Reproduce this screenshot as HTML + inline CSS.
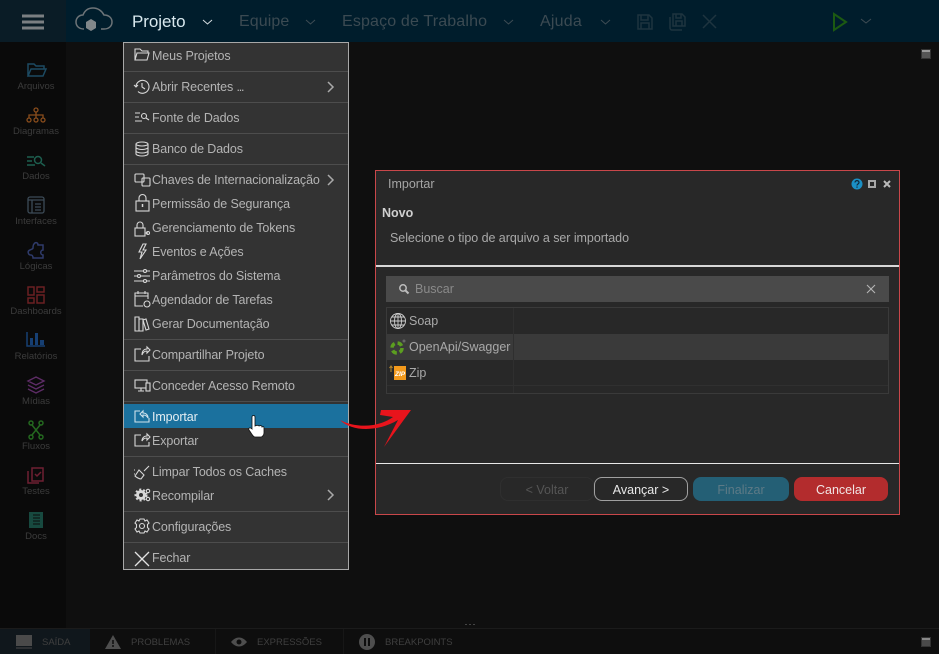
<!DOCTYPE html>
<html lang="pt"><head><meta charset="utf-8"><title>Importar</title>
<style>
html,body{margin:0;padding:0;background:#0f0f0f}
#p{position:relative;width:939px;height:654px;overflow:hidden;background:#0f0f0f;font-family:"Liberation Sans",sans-serif}
#p div,#p span.t{position:absolute}
.t{white-space:nowrap;line-height:16px;height:16px}
.m{font-size:12.5px;color:#b4b4b4;left:152px;letter-spacing:-.11px}
.s{font-size:9.5px;color:#3c3c3c;width:66px;left:3px;text-align:center}
.n{font-size:16px;color:#3b4a52;line-height:20px;height:20px}
.sep{left:124px;width:224px;height:1px;background:#4d4d4d}
.b{font-size:9.5px;color:#3f3f3f;top:635px}
.btn{top:477px;width:92px;height:22px;line-height:24px;border-radius:8px;text-align:center;font-size:12.5px;border:1px solid transparent}
svg{position:absolute;left:0;top:0}
</style></head><body><div id="p">
<div style="left:0;top:0;width:939px;height:42px;background:#001d2c"></div>
<div style="left:0;top:0;width:66px;height:42px;background:#0a1c26"></div>
<div style="left:0;top:42px;width:66px;height:586px;background:#0a0a0a"></div>
<div style="left:0;top:628px;width:939px;height:26px;background:#0e0e0e;border-top:1px solid #1b1b1b;box-sizing:border-box"></div>
<div style="left:0;top:629px;width:90px;height:25px;background:#10171c"></div>
<div style="left:215px;top:629px;width:1px;height:25px;background:#171717"></div>
<div style="left:343px;top:629px;width:1px;height:25px;background:#171717"></div>

<span class="t" style="left:132px;top:12px;font-size:17px;line-height:20px;height:20px;color:#d8e8ee;letter-spacing:-.05px">Projeto</span>
<span class="t n" style="left:239px;top:12px;letter-spacing:.1px">Equipe</span>
<span class="t n" style="left:342px;top:12px;letter-spacing:.16px">Espaço de Trabalho</span>
<span class="t n" style="left:540px;top:12px;letter-spacing:.2px">Ajuda</span>

<span class="t s" style="top:79px">Arquivos</span>
<span class="t s" style="top:124px">Diagramas</span>
<span class="t s" style="top:169px">Dados</span>
<span class="t s" style="top:214px">Interfaces</span>
<span class="t s" style="top:259px">Lógicas</span>
<span class="t s" style="top:304px">Dashboards</span>
<span class="t s" style="top:349px">Relatórios</span>
<span class="t s" style="top:394px">Mídias</span>
<span class="t s" style="top:439px">Fluxos</span>
<span class="t s" style="top:484px">Testes</span>
<span class="t s" style="top:529px">Docs</span>

<span class="t b" style="left:42px">SAÍDA</span>
<span class="t b" style="left:131px">PROBLEMAS</span>
<span class="t b" style="left:257px">EXPRESSÕES</span>
<span class="t b" style="left:385px">BREAKPOINTS</span>

<!-- menu -->
<div style="left:123px;top:42px;width:224px;height:526px;background:#333;border:1px solid #a8a8a8"></div>
<div style="left:124px;top:404px;width:224px;height:24px;background:#1b719e"></div>
<div class="sep" style="top:71px"></div><div class="sep" style="top:102px"></div><div class="sep" style="top:133px"></div><div class="sep" style="top:164px"></div><div class="sep" style="top:339px"></div><div class="sep" style="top:370px"></div><div class="sep" style="top:401px"></div><div class="sep" style="top:456px"></div><div class="sep" style="top:511px"></div><div class="sep" style="top:542px"></div>
<span class="t m" style="top:48px">Meus Projetos</span>
<span class="t m" style="top:79px">Abrir Recentes <span style="letter-spacing:-1.2px">...</span></span>
<span class="t m" style="top:110px">Fonte de Dados</span>
<span class="t m" style="top:141px">Banco de Dados</span>
<span class="t m" style="top:172px">Chaves de Internacionalização</span>
<span class="t m" style="top:196px">Permissão de Segurança</span>
<span class="t m" style="top:220px">Gerenciamento de Tokens</span>
<span class="t m" style="top:244px">Eventos e Ações</span>
<span class="t m" style="top:268px">Parâmetros do Sistema</span>
<span class="t m" style="top:292px">Agendador de Tarefas</span>
<span class="t m" style="top:316px">Gerar Documentação</span>
<span class="t m" style="top:347px">Compartilhar Projeto</span>
<span class="t m" style="top:378px">Conceder Acesso Remoto</span>
<span class="t m" style="top:409px;color:#e4eef3">Importar</span>
<span class="t m" style="top:433px">Exportar</span>
<span class="t m" style="top:464px">Limpar Todos os Caches</span>
<span class="t m" style="top:488px">Recompilar</span>
<span class="t m" style="top:519px">Configurações</span>
<span class="t m" style="top:550px">Fechar</span>

<!-- dialog -->
<div style="left:375px;top:170px;width:523px;height:343px;background:#282828;border:1px solid #c9474a"></div>
<span class="t" style="left:388px;top:176px;font-size:12.5px;color:#a5a5a5">Importar</span>
<span class="t" style="left:382px;top:205px;font-size:12.5px;font-weight:bold;color:#cfcfcf">Novo</span>
<span class="t" style="left:390px;top:230px;font-size:12.5px;color:#a9a9a9;letter-spacing:-.05px">Selecione o tipo de arquivo a ser importado</span>
<div style="left:376px;top:265px;width:523px;height:2px;background:#d8d8d8"></div>
<div style="left:376px;top:463px;width:523px;height:1px;background:#e8e8e8"></div>
<div style="left:386px;top:276px;width:503px;height:26px;background:#4a4a4a"></div>
<span class="t" style="left:415px;top:281px;font-size:12.5px;color:#8a8a8a">Buscar</span>
<div style="left:386px;top:307px;width:501px;height:85px;border:1px solid #3a3a3a"></div>
<div style="left:387px;top:334px;width:501px;height:26px;background:#3a3a3a"></div>
<div style="left:387px;top:385px;width:501px;height:1px;background:#303030"></div>
<div style="left:513px;top:308px;width:1px;height:85px;background:#2f2f2f"></div>
<span class="t" style="left:409px;top:313px;font-size:12.5px;color:#a9a9a9">Soap</span>
<span class="t" style="left:409px;top:339px;font-size:12.5px;color:#a9a9a9">OpenApi/Swagger</span>
<span class="t" style="left:409px;top:365px;font-size:12.5px;color:#a9a9a9">Zip</span>
<div class="btn" style="left:500px;color:#555;border-color:#2f2f2f">&lt; Voltar</div>
<div class="btn" style="left:594px;color:#e8e8e8;border-color:#a0a0a0">Avançar &gt;</div>
<div class="btn" style="left:693px;width:94px;color:#5d7a86;background:#245f75">Finalizar</div>
<div class="btn" style="left:794px;width:92px;color:#f0e4e4;background:#b32c2d">Cancelar</div>

<svg width="939" height="654" viewBox="0 0 939 654" fill="none">
<!-- hamburger -->
<path d="M22 16h22M22 22h22M22 28h22" stroke="#7b7f82" stroke-width="3"/>
<!-- cloud -->
<path d="M84 29c-5 0-8-3-8-7s3-7 7-7c2-5 6-7 10-7 5 0 9 3 11 7 5 0 8 3 8 7s-3 7-8 7h-3" stroke="#6d7478" stroke-width="1.500"/>
<path d="M86 22l5-3 5 3v6l-5 3-5-3z" fill="#81878a"/>
<!-- nav chevrons -->
<path d="M203 20l4.500 4 4.500-4" stroke="#d5dde0" stroke-width="1"/>
<path d="M306 20l4.500 4 4.500-4M504 20l4.500 4 4.500-4M601 20l4.500 4 4.500-4M861 19l5 4 5-4" stroke="#3e4c54" stroke-width="1"/>
<!-- save etc -->
<path d="M638 15h11l3 3v11h-14zM641 15v5h7v-5M641 29v-6h8v6" stroke="#1e343f" stroke-width="1.500"/>
<path d="M673 14h9l3 3v9h-12zM676 14v4h5v-4M676 26v-5h6v5M670 17v11a2 2 0 0 0 2 2h10" stroke="#1e343f" stroke-width="1.500"/>
<path d="M703 15l13 13M716 15l-13 13" stroke="#1e343f" stroke-width="1.500"/>
<path d="M834 14v16l12-8z" stroke="#1c5a12" stroke-width="2"/>
<!-- panel icon -->
<rect x="921.500" y="49.500" width="9" height="9" fill="#555" stroke="#333"/><rect x="922" y="50" width="8" height="2" fill="#999"/>
<rect x="921.500" y="637.500" width="9" height="9" fill="#4a4a4a" stroke="#333"/><rect x="922" y="638" width="8" height="2" fill="#888"/>
<!-- sidebar icons -->
<path d="M28 76V64h6l2 2h8v3M28 76l3-7h15l-3 7z" stroke="#1c4a62" stroke-width="1.500"/>
<g stroke="#8a4d1c" stroke-width="1.300"><circle cx="36" cy="110" r="2"/><circle cx="29" cy="120" r="2"/><circle cx="36" cy="120" r="2"/><circle cx="43" cy="120" r="2"/><path d="M36 112v6M29 118v-3h14v3"/></g>
<path d="M27 157h7M27 161h5M27 165h8" stroke="#1d5f4f" stroke-width="1.400"/><circle cx="38" cy="160" r="3.500" stroke="#1d5f4f" stroke-width="1.500"/><path d="M41 163l4 3" stroke="#1d5f4f" stroke-width="1.500"/>
<g stroke="#3c4b57" stroke-width="1.300"><rect x="28" y="197" width="16" height="16" rx="2"/><path d="M28 200h16M32 200v13M35 204h6M35 207h6M35 210h6"/></g>
<path d="M34 244c1-2 4-2 4 1h5v5c-3 0-3 5 0 5v3H33c0-2-1-3-2-3-3 0-4-4-1-5 2-1 3-1 3-2 0-2 0-3 1-4z" stroke="#2f3b6b" stroke-width="1.500"/>
<g stroke="#6b1f22" stroke-width="1.500"><rect x="28" y="287" width="6" height="8"/><rect x="37" y="287" width="7" height="5"/><rect x="28" y="298" width="6" height="5"/><rect x="37" y="295" width="7" height="8"/></g>
<path d="M27 332v14h18" stroke="#163f73" stroke-width="1.500"/><path d="M30 338h3v7h-3zM35 333h3v12h-3zM40 340h4v5h-4z" fill="#163f73"/>
<g stroke="#5d2c66" stroke-width="1.400"><path d="M36 377l8 4-8 4-8-4zM28 385l8 4 8-4M28 389l8 4 8-4"/></g>
<g stroke="#24681f" stroke-width="1.500"><circle cx="31" cy="423" r="2"/><circle cx="41" cy="423" r="2"/><circle cx="31" cy="437" r="2"/><circle cx="41" cy="437" r="2"/><path d="M32 425l8 10M40 425l-8 10"/></g>
<g stroke="#6e1f32" stroke-width="1.500"><rect x="32" y="468" width="11" height="13"/><path d="M28 471v12h11M35 474l2 2 4-4"/></g>
<path d="M29 512h14v16H29z" fill="#17493f"/><path d="M33 515h7M33 518h7M33 521h7M33 524h7" stroke="#0b0b0b"/>
<!-- bottom icons -->
<rect x="16" y="635" width="16" height="11" fill="#4a4a4a"/><path d="M16 648h16" stroke="#4a4a4a"/>
<path d="M113 635l8 14h-16z" fill="#4e4e4e"/><path d="M113 640v4M113 645v2" stroke="#0e0e0e" stroke-width="1.500"/>
<path d="M231 642c5-6 11-6 16 0-5 6-11 6-16 0z" fill="#4e4e4e"/><circle cx="239" cy="642" r="2.500" fill="#0e0e0e"/>
<circle cx="367" cy="642" r="8" fill="#4e4e4e"/><path d="M365 638v8M369 638v8" stroke="#0e0e0e" stroke-width="2"/>
<path d="M465 624.500h2M469 624.500h2M473 624.500h2" stroke="#444" stroke-width="1"/>

<!-- menu icons -->
<g stroke="#d8d8d8" stroke-width="1.100">
<path d="M135 60V49h5l2 2h6v2M135 60l2-7h12l-2 7z"/>
<path d="M136 87a6.500 6.500 0 1 1 2 4.500M134 85l2 2 2-2M142 83v4l3 2"/>
<path d="M135 113h5M135 117h4M135 121h7"/><circle cx="144" cy="116" r="2.500"/><path d="M146 118l3 2"/>
<ellipse cx="142" cy="144" rx="6" ry="2"/><path d="M136 144v10c0 1 3 2 6 2s6-1 6-2v-10M136 147.500c0 1 3 2 6 2s6-1 6-2M136 151c0 1 3 2 6 2s6-1 6-2"/>
<rect x="135" y="174" width="9" height="8" rx="1"/><rect x="142" y="178" width="8" height="8" rx="1"/>
<rect x="136" y="201" width="13" height="10"/><path d="M139 201v-3a3.500 3.500 0 0 1 7 0v3"/><path d="M142.500 204v3" stroke-width="1.500"/>
<rect x="135" y="228" width="10" height="8"/><path d="M137 228v-3a3 3 0 0 1 6 0v3M145 233h3"/><circle cx="148" cy="233" r="1.500"/>
<path d="M143 244l-4 8h3l-2 7 6-9h-3l3-6z"/>
<path d="M134 271h16M134 276h16M134 281h16"/><circle cx="145" cy="271" r="1.500" fill="#333"/><circle cx="139" cy="276" r="1.500" fill="#333"/><circle cx="145" cy="281" r="1.500" fill="#333"/>
<path d="M148 299v-6h-13v13h8M135 296h13M138 291v3M145 291v3"/><circle cx="147" cy="304" r="3"/>
<path d="M135 317h4v14h-4zM139 319h4v12h-4zM143 320l3-1 3 10-3 1z"/>
<path d="M141 349h-6v12h14v-5M142 355c0-4 2-6 5-6v-2l3 3-3 3v-2c-2 0-4 1-5 4z"/>
<rect x="135" y="380" width="12" height="8"/><path d="M138 391h6M141 388v3"/><rect x="146" y="383" width="4" height="8" fill="#333"/>
<path d="M140 411h-5v11h14v-4" stroke="#cfe2ec"/><path d="M148 418c0-3-2-5-5-5v-2l-3 3 3 3v-2c2 0 4 1 5 3z" stroke="#cfe2ec"/>
<path d="M141 435h-6v11h14v-4M142 441c0-3 2-5 5-5v-2l3 3-3 3v-2c-2 0-4 1-5 3z"/>
<path d="M144 471l5-5M139 470l5 5-3 4c-2 0-5-2-6-3zM135 474l-1 0M134 470h1"/>
<circle cx="141" cy="495" r="3.500" stroke-width="3"/><circle cx="141" cy="495" r="5.500" stroke-dasharray="2 2" stroke-width="2"/><circle cx="148" cy="491" r="1.700"/><circle cx="148" cy="499" r="1.700"/>
<circle cx="142" cy="526" r="2.500"/><path d="M140 519h4l1 2 2-1 2 3-1.500 1.500v3L149 529l-2 3-2-1-1 2h-4l-1-2-2 1-2-3 1.500-1.500v-3L135 523l2-3 2 1z"/>
</g>
<path d="M135 552l14 14M149 552l-14 14" stroke="#e2e2e2" stroke-width="1.300"/>
<path d="M328 82l5 5-5 5M328 175l5 5-5 5M328 490l5 5-5 5" stroke="#a9a9a9" stroke-width="1.500"/>

<!-- cursor -->
<path d="M252 417c0-2 3-2 3 0v9c2-1 3-1 4 0 2-1 3 0 3 1 2-1 2 0 2 2v4c0 2-2 4-3 4h-6c-2 0-3-3-6-7-1-2 1-3 3-1z" fill="#fff" stroke="#111" stroke-width=".8"/>

<!-- arrow -->
<path d="M340 420C355 428 378 428 393 417L380 415L381 410L411 410L384 447L398 420C378 432 352 432 340 420z" fill="#e8141c"/>

<!-- title controls -->
<circle cx="857" cy="184" r="5.500" fill="#1b8fc4"/>
<path d="M855 182.500c0-2.500 4-2.500 4 0 0 1.500-2 1.500-2 3M857 186.500v1.200" stroke="#10293a" stroke-width="1.200"/>
<rect x="869" y="181" width="6" height="6" stroke="#a8a8a8" stroke-width="2"/>
<path d="M884 181l6 6M890 181l-6 6" stroke="#bbb" stroke-width="2"/>
<!-- search -->
<circle cx="403" cy="288" r="3.200" stroke="#bdbdbd" stroke-width="1.500"/><path d="M405.500 290.500l3 3" stroke="#bdbdbd" stroke-width="2"/>
<path d="M867 285l8 8M875 285l-8 8" stroke="#b5b5b5" stroke-width="1.100"/>
<!-- list icons -->
<g stroke="#cfcfcf" stroke-width=".9"><circle cx="398" cy="321" r="7.500"/><ellipse cx="398" cy="321" rx="3.500" ry="7.500"/><path d="M398 313.500v15M390.500 321h15M391.500 317h13M391.500 325h13"/></g>
<circle cx="397" cy="348" r="5" stroke="#5c9e20" stroke-width="3.500" stroke-dasharray="5 3"/>
<circle cx="404" cy="341" r="1.500" fill="#666"/>
<rect x="394" y="366" width="12" height="14" fill="#f39a1c"/>
<text x="395" y="376" font-family="Liberation Sans" font-size="6.500" font-weight="bold" font-style="italic" fill="#fff">ZIP</text>
<path d="M391 372v-5M389.500 368l1.500-2 1.500 2" stroke="#b98a2c"/>
</svg>
</div></body></html>
